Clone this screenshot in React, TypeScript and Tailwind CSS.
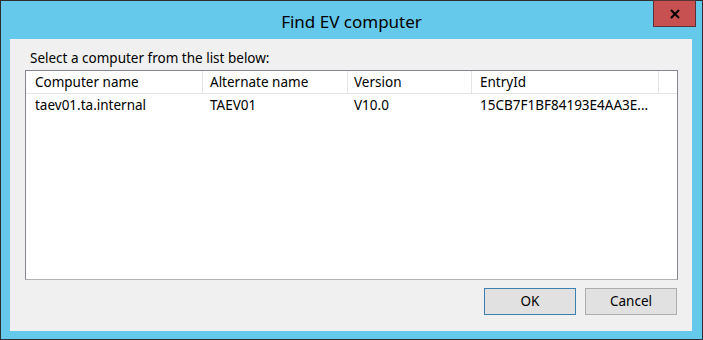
import { X } from "lucide-react";

const columns = [
  { label: "Computer name", w: "w-[177px]", pad: "pl-[9px]" },
  { label: "Alternate name", w: "w-[145px]", pad: "pl-[7px]" },
  { label: "Version", w: "w-[124px]", pad: "pl-[6px]" },
  { label: "EntryId", w: "w-[187px]", pad: "pl-[8px]" },
];

const rows = [["taev01.ta.internal", "TAEV01", "V10.0", "15CB7F1BF84193E4AA3E..."]];

export default function App() {
  return (
    <div
      className="w-[703px] h-[340px] border border-[#2f2f2f] bg-[#65c9eb] flex flex-col text-black"
      style={{ fontFamily: '"Noto Sans", "Open Sans", sans-serif' }}
    >
      <div className="relative h-[38px] flex items-center justify-center shrink-0">
        <span className="text-[17px] leading-none pt-[2px]">Find EV computer</span>
        <button className="absolute top-[-1px] right-[6px] w-[43px] h-[27px] bg-[#c75050] border border-[#5a3434] flex items-center justify-center">
          <X className="w-[14px] h-[14px] text-black" strokeWidth={3.5} />
        </button>
      </div>

      <div className="ml-[9px] w-[682px] h-[292px] bg-[#f0f0f0] flex flex-col text-[13.5px]">
        <div className="pl-[20px] pt-[11px] h-[31px] leading-[16px]">Select a computer from the list below:</div>

        <div className="ml-[15px] w-[653px] h-[210px] border border-[#828790] border-b-[#b0b0b0] bg-white flex flex-col">
          <div className="flex h-[23px] border-b border-[#e5e5e5] shrink-0">
            {columns.map((c) => (
              <div key={c.label} className={`${c.w} ${c.pad} border-r border-[#e5e5e5] flex items-center`}>
                {c.label}
              </div>
            ))}
          </div>
          {rows.map((r, i) => (
            <div key={i} className="flex h-[22px] items-center">
              {r.map((cell, j) => (
                <div key={j} className={`${columns[j].w} ${columns[j].pad}`}>
                  {cell}
                </div>
              ))}
            </div>
          ))}
        </div>

        <div className="flex justify-end gap-[9px] pr-[15px] pt-[8px]">
          <button className="w-[92px] h-[27px] bg-[#e1e1e1] border border-[#3c7fb1]">OK</button>
          <button className="w-[92px] h-[27px] bg-[#e1e1e1] border border-[#adadad]">Cancel</button>
        </div>
      </div>
    </div>
  );
}
